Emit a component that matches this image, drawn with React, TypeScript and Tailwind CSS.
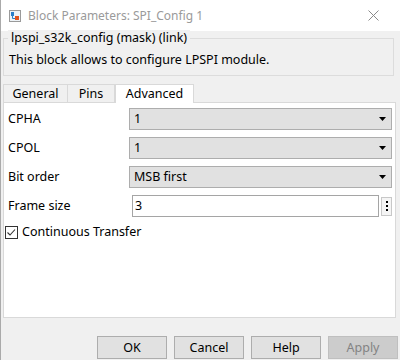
const Dropdown = ({ value }: { value: string }) => {
    return (
        <div className="flex flex-1 h-[22px] items-center justify-between bg-[#e1e1e1] border border-[#adadad] pl-[4px] pr-[5px]">
            <span>{value}</span>
            <svg width="7" height="4" viewBox="0 0 7 4">
                <path d="M0 0 H7 L3.5 4 Z" fill="#000" />
            </svg>
        </div>
    );
};

const Row = ({ label, children }: { label: string; children: React.ReactNode }) => {
    return (
        <div className="flex items-center h-[22px]">
            <div className="w-[125px] pl-[4px]">{label}</div>
            <div className="flex flex-1 items-center">{children}</div>
        </div>
    );
};

const Button = ({ label, disabled }: { label: string; disabled?: boolean }) => {
    return (
        <div
            className={
                disabled
                    ? 'flex w-[70px] h-[23px] items-center justify-center bg-[#cccccc] border border-[#bfbfbf] text-[#838383]'
                    : 'flex w-[70px] h-[23px] items-center justify-center bg-[#e1e1e1] border border-[#adadad] text-black'
            }
        >
            {label}
        </div>
    );
};

export default function App() {
    return (
        <div className="flex flex-col w-[400px] h-[360px] bg-[#f0f0f0] border-l border-[#aaaaaa] overflow-hidden [font-family:'Noto_Sans','Open_Sans',sans-serif] text-[12.5px] leading-[16px] text-black">
            {/* title bar */}
            <div className="flex h-[31px] shrink-0 items-center bg-white pl-[8px] pr-[21px] text-[12px]">
                <svg width="12" height="12" viewBox="0 0 12 12">
                    <rect x="0.5" y="0.5" width="11" height="11" fill="#ffffff" stroke="#9a9a9a" />
                    <rect x="1" y="1" width="10" height="10" fill="#eef3f7" />
                    <rect x="2" y="2" width="3" height="4" fill="#2b7fc9" />
                    <path d="M3.5 6 V8.5 H6" stroke="#2b7fc9" strokeWidth="1" fill="none" />
                    <rect x="6" y="6" width="4" height="4" fill="#e2531e" />
                </svg>
                <div className="ml-[7px] text-[#9a9a9a]">Block Parameters: SPI_Config 1</div>
                <svg className="ml-auto" width="11" height="11" viewBox="0 0 11 11">
                    <path d="M0.5 0.5 L10.5 10.5 M10.5 0.5 L0.5 10.5" stroke="#8a8a8a" strokeWidth="1" />
                </svg>
            </div>

            {/* mask group box */}
            <div className="mt-[7px] ml-[2px] mr-[6px] h-[38px] shrink-0 border border-[#dcdcdc]">
                <div className="w-fit -mt-[9px] ml-[4px] px-[3px] bg-[#f0f0f0]">lpspi_s32k_config (mask) (link)</div>
                <div className="mt-[6px] pl-[5px]">This block allows to configure LPSPI module.</div>
            </div>

            {/* tabs */}
            <div className="flex mt-[7px] ml-[2px] h-[19px] shrink-0 items-end">
                <div className="flex w-[65px] h-[18px] items-center justify-center border border-b-0 border-[#d9d9d9] bg-[#f0f0f0]">General</div>
                <div className="flex w-[47px] h-[18px] items-center justify-center border border-b-0 border-l-0 border-[#d9d9d9] bg-[#f0f0f0]">Pins</div>
                <div className="relative flex w-[79px] h-[19px] -mb-px items-center justify-center border border-b-0 border-[#d9d9d9] bg-white z-10">Advanced</div>
            </div>

            {/* tab panel */}
            <div className="flex flex-col ml-[2px] mr-[4px] h-[216px] shrink-0 gap-[7px] border border-[#d9d9d9] bg-white pt-[5px] pr-[3px]">
                <Row label="CPHA">
                    <Dropdown value="1" />
                </Row>
                <Row label="CPOL">
                    <Dropdown value="1" />
                </Row>
                <Row label="Bit order">
                    <Dropdown value="MSB first" />
                </Row>
                <Row label="Frame size">
                    <div className="flex flex-1 h-[22px] items-center ml-[3px] border border-[#a5a5a5] bg-white pl-[2px]">3</div>
                    <div className="flex w-[11px] h-[19px] ml-[2px] flex-col items-center justify-center gap-[2px] border border-[#c8c8c8] bg-[#f5f5f5]">
                        <span className="w-[2px] h-[2px] bg-black" />
                        <span className="w-[2px] h-[2px] bg-black" />
                        <span className="w-[2px] h-[2px] bg-black" />
                    </div>
                </Row>
                <div className="flex items-center h-[16px] pl-[1px]">
                    <svg width="13" height="13" viewBox="0 0 13 13">
                        <rect x="0.5" y="0.5" width="12" height="12" fill="#fff" stroke="#333" />
                        <path d="M2.5 6.5 L5 9 L10 3.5" stroke="#333" strokeWidth="1.1" fill="none" />
                    </svg>
                    <span className="ml-[4px]">Continuous Transfer</span>
                </div>
            </div>

            {/* buttons */}
            <div className="flex mt-[18px] gap-[7px] justify-end pr-[2px]">
                <Button label="OK" />
                <Button label="Cancel" />
                <Button label="Help" />
                <Button label="Apply" disabled />
            </div>
        </div>
    );
}
